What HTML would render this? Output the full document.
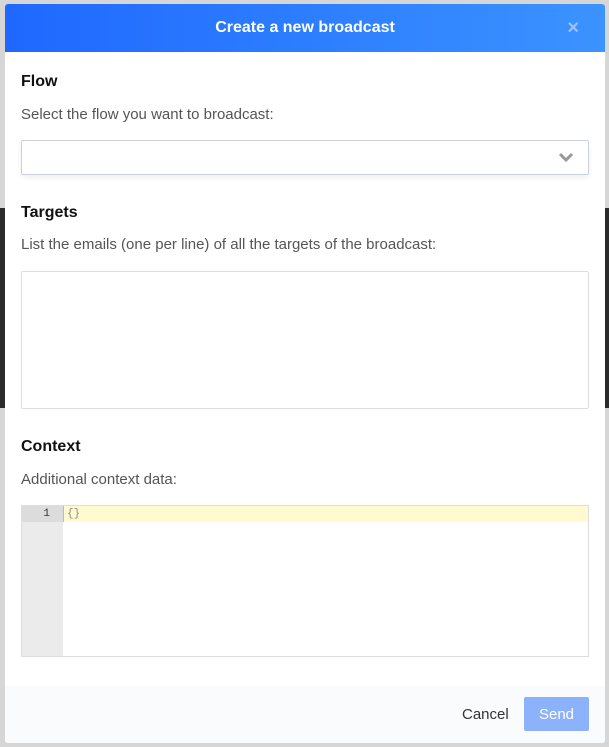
<!DOCTYPE html>
<html><head><style>
body{margin:0;width:609px;height:747px;background:#d6d6d6;position:relative;overflow:hidden;font-family:"Liberation Sans",sans-serif}
.bgl{position:absolute;left:0;top:208px;width:5px;height:200px;background:#2b2b2b}
.bgr{position:absolute;right:0;top:208px;width:4px;height:200px;background:#2b2b2b}
.m{position:absolute;left:5px;top:4px;width:600px;height:739px;background:#fff;border-radius:3px;overflow:hidden}
.h{height:48px;background:linear-gradient(90deg,#1f68ff,#3b93ff);color:#fff;font-weight:bold;font-size:16px;text-align:center;line-height:48px;position:relative}
.x{position:absolute;right:26px;top:0;color:#9cc3ff;font-size:20px}
.t{position:absolute;left:16px;font-weight:bold;font-size:16px;color:#111}
.l{position:absolute;left:16px;font-size:15px;color:#555}
.sel{position:absolute;left:16px;top:136px;width:566px;height:33px;border:1px solid #c9d0e0;border-radius:2px;box-shadow:0 3px 6px rgba(0,0,0,.06)}
.ta{position:absolute;left:16px;top:267px;width:566px;height:136px;border:1px solid #ddd;border-radius:2px}
.ed{position:absolute;left:16px;top:501px;width:566px;height:150px;border:1px solid #ddd}
.g{position:absolute;left:0;top:0;width:41px;height:150px;background:#ebebeb}
.g1{position:absolute;left:0;top:0;width:41px;height:16px;background:#dcdcdc;font:11px "Liberation Mono",monospace;color:#333;text-align:right;line-height:16px;box-sizing:border-box;padding-right:13px}
.al{position:absolute;left:41px;top:0;right:0;height:16px;background:#fffad0;font:11px "Liberation Mono",monospace;color:#888;line-height:16px;padding-left:3px;border-left:1px solid #bbb}
.f{position:absolute;left:0;bottom:0;width:600px;height:57px;background:#fafbfc}
.c{position:absolute;left:457px;top:702px;font-size:15px;color:#333}
.s{position:absolute;left:519px;top:693px;width:65px;height:34px;background:#8cb2fb;color:#fff;font-size:15px;text-align:center;line-height:36px;border-radius:2px}
</style></head><body>
<div class="bgl"></div><div class="bgr"></div>
<div class="m">
<div class="h">Create a new broadcast<span class="x">×</span></div>
<div class="t" style="top:69px">Flow</div>
<div class="l" style="top:102px">Select the flow you want to broadcast:</div>
<div class="sel"><svg style="position:absolute;right:14px;top:11px" width="16" height="11" viewBox="0 0 16 11"><path d="M2 2l6 6 6-6" stroke="#999" stroke-width="3" fill="none"/></svg></div>
<div class="t" style="top:200px">Targets</div>
<div class="l" style="top:232px">List the emails (one per line) of all the targets of the broadcast:</div>
<div class="ta"></div>
<div class="t" style="top:434px">Context</div>
<div class="l" style="top:467px">Additional context data:</div>
<div class="ed"><div class="g"></div><div class="g1">1</div><div class="al">{}</div></div>
<div class="f"></div>
<div class="c">Cancel</div>
<div class="s">Send</div>
</div>
</body></html>
